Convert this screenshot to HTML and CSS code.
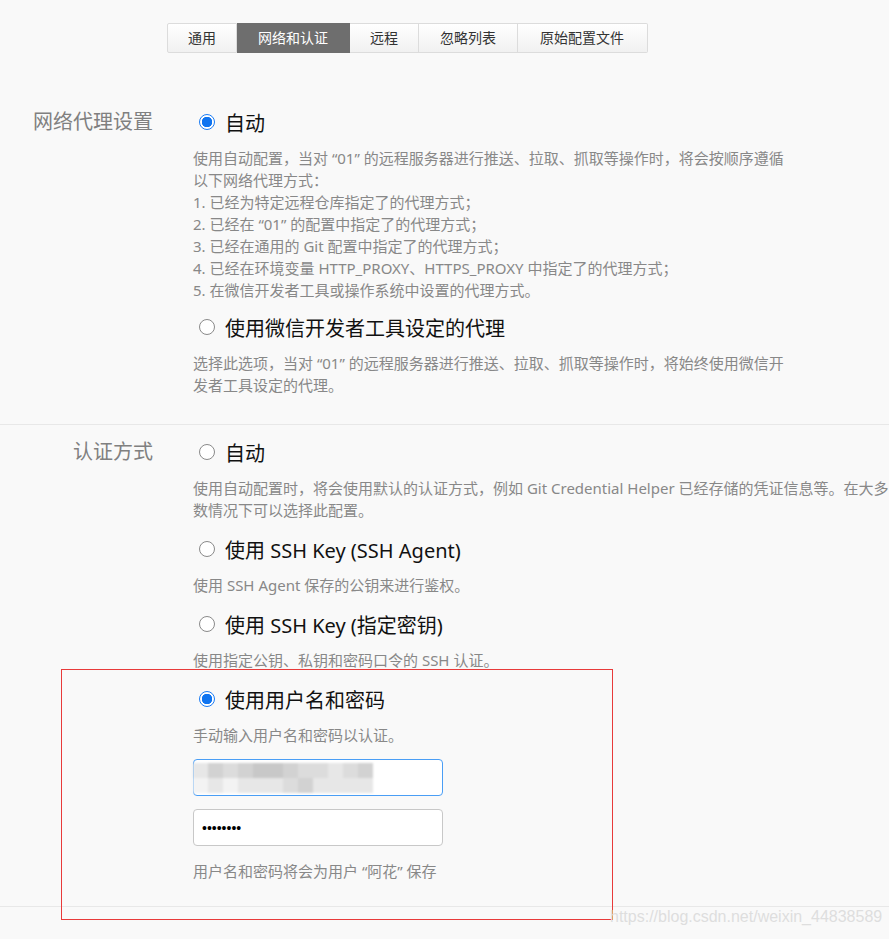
FILE: index.html
```html
<!DOCTYPE html>
<html lang="zh-CN">
<head>
  <meta charset="UTF-8" />
  <title>网络和认证</title>
  <link rel="stylesheet" href="styles.css">
</head>
<body>

  <!-- Tabs -->
  <div class="tab-bar">
    <div class="tab">通用</div>
    <div class="tab active">网络和认证</div>
    <div class="tab">远程</div>
    <div class="tab">忽略列表</div>
    <div class="tab">原始配置文件</div>
  </div>

  <!-- Proxy settings -->
  <div class="section section-proxy">
    <div class="section-label">网络代理设置</div>
    <div class="section-body">
      <div class="option-row">
        <span class="radio checked"></span>
        <span class="option-text">自动</span>
      </div>
      <div class="option-desc">
        使用自动配置，当对 “01” 的远程服务器进行推送、拉取、抓取等操作时，将会按顺序遵循<br>
        以下网络代理方式：<br>
        1. 已经为特定远程仓库指定了的代理方式；<br>
        2. 已经在 “01” 的配置中指定了的代理方式；<br>
        3. 已经在通用的 Git 配置中指定了的代理方式；<br>
        4. 已经在环境变量 HTTP_PROXY、HTTPS_PROXY 中指定了的代理方式；<br>
        5. 在微信开发者工具或操作系统中设置的代理方式。
      </div>
      <div class="option-row">
        <span class="radio"></span>
        <span class="option-text">使用微信开发者工具设定的代理</span>
      </div>
      <div class="option-desc">
        选择此选项，当对 “01” 的远程服务器进行推送、拉取、抓取等操作时，将始终使用微信开<br>
        发者工具设定的代理。
      </div>
    </div>
  </div>

  <!-- Auth settings -->
  <div class="section section-auth">
    <div class="section-label">认证方式</div>
    <div class="section-body">
      <div class="option-row">
        <span class="radio"></span>
        <span class="option-text">自动</span>
      </div>
      <div class="option-desc">
        使用自动配置时，将会使用默认的认证方式，例如 Git Credential Helper 已经存储的凭证信息等。在大多<br>
        数情况下可以选择此配置。
      </div>
      <div class="option-row">
        <span class="radio"></span>
        <span class="option-text">使用 SSH Key (SSH Agent)</span>
      </div>
      <div class="option-desc">使用 SSH Agent 保存的公钥来进行鉴权。</div>
      <div class="option-row">
        <span class="radio"></span>
        <span class="option-text">使用 SSH Key (指定密钥)</span>
      </div>
      <div class="option-desc">使用指定公钥、私钥和密码口令的 SSH 认证。</div>
      <div class="option-row">
        <span class="radio checked"></span>
        <span class="option-text">使用用户名和密码</span>
      </div>
      <div class="option-desc">手动输入用户名和密码以认证。</div>

      <div class="field">
        <input class="text-input focused" type="text" value="">
        <div class="blur-mask">
          <span class="b1"></span><span class="b3"></span><span class="b2"></span><span class="b3"></span><span class="b4"></span><span class="b4"></span><span class="b3"></span><span class="b2"></span><span class="b2"></span><span class="b1"></span><span class="b2"></span><span class="b3"></span>
          <span class="b0"></span><span class="b1"></span><span class="b0"></span><span class="b1"></span><span class="b1"></span><span class="b1"></span><span class="b2"></span><span class="b3"></span><span class="b1"></span><span class="b1"></span><span class="b1"></span><span class="b1"></span>
        </div>
      </div>
      <div class="field">
        <input class="text-input" type="password" value="abcdefgh">
      </div>
      <div class="save-note">用户名和密码将会为用户 “阿花” 保存</div>
    </div>
  </div>

  <!-- annotation box + watermark -->
  <div class="red-box"></div>
  <div class="watermark">https://blog.csdn.net/weixin_44838589</div>

</body>
</html>
```

FILE: styles.css
```css
body {
  margin: 0;
  padding: 0;
  background-color: #f9f9f9;
  font-family: "Noto Sans", "Noto Sans CJK SC", sans-serif;
  color: #333;
  position: relative;
  min-height: 939px;
}

/* tabs */
.tab-bar {
  display: flex;
  margin-left: 167px;
  padding-top: 23px;
}

.tab {
  height: 28px;
  line-height: 28px;
  padding: 0 20px;
  font-size: 14px;
  color: #333;
  background: linear-gradient(#ffffff, #f1f1f1);
  border: 1px solid #dcdcdc;
  border-left: none;
}

.tab:first-child {
  border-left: 1px solid #dcdcdc;
  border-radius: 2px 0 0 2px;
}

.tab:nth-child(2) {
  padding: 0 21px;
}

.tab:nth-child(4) {
  padding: 0 21px;
}

.tab:last-child {
  padding: 0 23px 0 22px;
  border-radius: 0 2px 2px 0;
}

.tab.active {
  background: #6e6e6e;
  border-color: #6e6e6e;
  color: #fff;
}

/* sections */
.section {
  display: flex;
  border-bottom: 1px solid #e8e8e8;
}

.section-proxy {
  margin-top: 54px;
  padding-bottom: 28px;
}

.section-proxy .option-desc {
  margin-bottom: 11px;
}

.section-auth {
  padding-top: 12px;
  padding-bottom: 24px;
}

.section-label {
  width: 153px;
  flex-shrink: 0;
  text-align: right;
  font-size: 20px;
  line-height: 30px;
  color: #808080;
  padding-right: 40px;
}

.section-body {
  flex: 1;
}

.option-row {
  display: flex;
  align-items: center;
  height: 30px;
}

.radio {
  width: 14px;
  height: 14px;
  border: 1px solid #8a8a8a;
  border-radius: 50%;
  background-color: #fff;
  margin-left: 6px;
  margin-right: 10px;
  box-sizing: content-box;
}

.radio.checked {
  border: 1px solid #1b7cf4;
  background: radial-gradient(circle, #0f74f0 0 5px, #fff 5.5px);
}

.option-text {
  font-size: 20px;
  color: #111;
}

.option-desc {
  font-size: 15px;
  line-height: 22px;
  color: #888;
  margin: 10px 0 13px;
  white-space: nowrap;
}

.section-proxy .option-desc:last-child {
  margin-bottom: 0;
}

/* inputs */
.field {
  position: relative;
  width: 250px;
  margin-bottom: 13px;
}

.text-input {
  display: block;
  box-sizing: border-box;
  width: 250px;
  height: 37px;
  border: 1px solid #c8c8c8;
  border-radius: 4px;
  background: #fff;
  padding: 0 8px;
  font-size: 14px;
  color: #000;
  outline: none;
}

.text-input.focused {
  border-color: #4a9ef5;
}

.blur-mask {
  position: absolute;
  left: 0;
  top: 4px;
  display: grid;
  grid-template-columns: repeat(12, 15px);
  grid-template-rows: 15px 15px;
  filter: blur(1px);
}

.blur-mask .b0 { background: #f3f3f3; }
.blur-mask .b1 { background: #e7e7e7; }
.blur-mask .b2 { background: #dcdcdc; }
.blur-mask .b3 { background: #d2d2d2; }
.blur-mask .b4 { background: #c8c8c8; }

.save-note {
  font-size: 15px;
  line-height: 22px;
  color: #888;
  margin-top: 14px;
}

/* overlay */
.red-box {
  position: absolute;
  left: 61px;
  top: 669px;
  width: 550px;
  height: 249px;
  border: 1px solid #e83a3a;
}

.watermark {
  position: absolute;
  left: 610px;
  top: 908px;
  font-family: "Liberation Sans", Arial, sans-serif;
  font-size: 16px;
  color: #dedede;
}
```
